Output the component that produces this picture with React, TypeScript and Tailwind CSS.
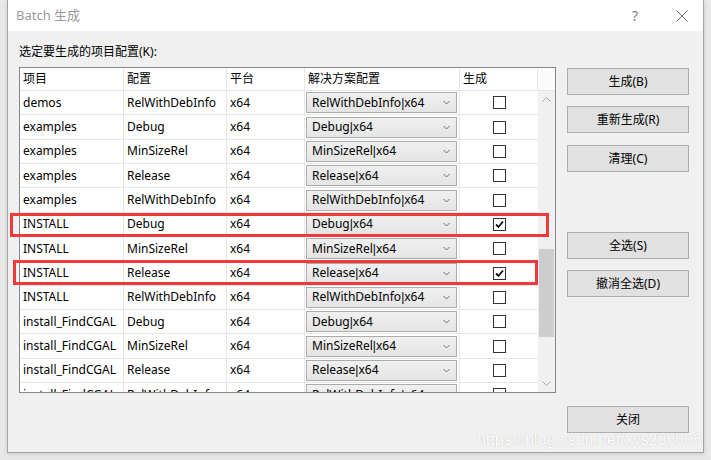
import { Fragment } from 'react';

type Row = { project: string; config: string; checked: boolean };

const rows: Row[] = [
  { project: 'demos', config: 'RelWithDebInfo', checked: false },
  { project: 'examples', config: 'Debug', checked: false },
  { project: 'examples', config: 'MinSizeRel', checked: false },
  { project: 'examples', config: 'Release', checked: false },
  { project: 'examples', config: 'RelWithDebInfo', checked: false },
  { project: 'INSTALL', config: 'Debug', checked: true },
  { project: 'INSTALL', config: 'MinSizeRel', checked: false },
  { project: 'INSTALL', config: 'Release', checked: true },
  { project: 'INSTALL', config: 'RelWithDebInfo', checked: false },
  { project: 'install_FindCGAL', config: 'Debug', checked: false },
  { project: 'install_FindCGAL', config: 'MinSizeRel', checked: false },
  { project: 'install_FindCGAL', config: 'Release', checked: false },
  { project: 'install_FindCGAL', config: 'RelWithDebInfo', checked: false },
];

const cell = 'flex items-center pl-[3px] border-r border-[#e6e6e6] whitespace-nowrap overflow-hidden';

/** Checkbox drawn like the classic Windows one */
function CheckBox({ checked }: { checked: boolean }) {
  return (
    <div className="w-[13px] h-[13px] border border-[#333333] bg-white flex items-center justify-center">
      {checked && (
        <svg width="9" height="9" viewBox="0 0 9 9">
          <path d="M1 4.5 L3.5 7 L8 1.5" fill="none" stroke="#111" strokeWidth="1.8" />
        </svg>
      )}
    </div>
  );
}

/** Combo box for the solution configuration */
function Combo({ value }: { value: string }) {
  return (
    <div className="ml-[1px] mr-[2px] flex-1 h-[21px] flex items-center justify-between pl-[5px] pr-[6px] border border-[#acacac] bg-gradient-to-b from-[#f0f0f0] to-[#e5e5e5]">
      <span className="whitespace-nowrap">
        {value}
        <span style={{ fontFamily: '"Liberation Sans", Arial, sans-serif' }}>|</span>
        x64
      </span>
      <svg width="7" height="5" viewBox="0 0 7 5">
        <path d="M0.5 1 L3.5 4 L6.5 1" fill="none" stroke="#707070" strokeWidth="1" />
      </svg>
    </div>
  );
}

/** Data row of the build grid */
function GridRow({ row }: { row: Row }) {
  return (
    <div className="flex h-[24.35px] shrink-0 border-b border-[#e6e6e6] bg-white">
      <div className={`${cell} w-[104px]`}>{row.project}</div>
      <div className={`${cell} w-[103px]`}>{row.config}</div>
      <div className={`${cell} w-[78px]`}>x64</div>
      <div className="flex items-center w-[155px] border-r border-[#e6e6e6]">
        <Combo value={row.config} />
      </div>
      <div className="flex items-center justify-center w-[78px]">
        <CheckBox checked={row.checked} />
      </div>
    </div>
  );
}

function DialogButton({ label, className = '' }: { label: string; className?: string }) {
  return (
    <button className={`w-[122px] h-[27px] bg-[#e1e1e1] border border-[#adadad] text-black ${className}`}>
      {label}
    </button>
  );
}

export default function App() {
  return (
    <div
      className="relative w-[711px] h-[460px] overflow-hidden bg-[#e8e8e8] pl-[7px] text-[12px] text-black"
      style={{ fontFamily: '"Noto Sans", "Noto Sans CJK SC", sans-serif' }}
    >
      <div className="w-[697px] h-[453px] border-x border-b border-[#a3a3a3] bg-[#f0f0f0] shadow-[0_1px_4px_rgba(0,0,0,0.15)] flex flex-col">
        {/* title bar */}
        <div className="h-[31px] bg-white flex items-center pl-[8px] pr-[15px]">
          <span className="text-[#9a9a9a] text-[13px]">Batch 生成</span>
          <span className="ml-auto text-[#7a7a7a] text-[14px] mr-[38px]">?</span>
          <svg width="12" height="12" viewBox="0 0 12 12">
            <path d="M0.5 0.5 L11.5 11.5 M11.5 0.5 L0.5 11.5" stroke="#6a6a6a" strokeWidth="1" />
          </svg>
        </div>

        <div className="flex flex-1 pl-[11px] pr-[14px]">
          {/* left: label and grid */}
          <div className="flex flex-col pt-[12px]">
            <div className="h-[17px] leading-[17px]">选定要生成的项目配置(K):</div>
            <div className="mt-[7px] w-[537px] h-[326px] border border-[#828790] bg-white flex flex-col overflow-hidden">
              <div className="flex h-[23px] shrink-0 border-b border-[#e6e6e6]">
                <div className={`${cell} w-[104px]`}>项目</div>
                <div className={`${cell} w-[103px]`}>配置</div>
                <div className={`${cell} w-[78px]`}>平台</div>
                <div className={`${cell} w-[155px]`}>解决方案配置</div>
                <div className={`${cell} w-[78px]`}>生成</div>
                <div className="flex-1 bg-[#fbfbfb]" />
              </div>
              <div className="flex flex-1 min-h-0">
                <div className="w-[518px] flex flex-col overflow-hidden">
                  {rows.map((row, i) => (
                    <Fragment key={i}>
                      <GridRow row={row} />
                    </Fragment>
                  ))}
                </div>
                {/* scrollbar */}
                <div className="w-[17px] bg-[#f0f0f0] flex flex-col">
                  <div className="h-[17px] flex items-center justify-center">
                    <svg width="9" height="5" viewBox="0 0 9 5">
                      <path d="M0.5 4.5 L4.5 0.5 L8.5 4.5" fill="none" stroke="#a6a6a6" strokeWidth="1" />
                    </svg>
                  </div>
                  <div className="h-[141px]" />
                  <div className="h-[88px] mx-[1px] bg-[#cdcdcd]" />
                  <div className="flex-1" />
                  <div className="h-[17px] flex items-center justify-center">
                    <svg width="9" height="5" viewBox="0 0 9 5">
                      <path d="M0.5 0.5 L4.5 4.5 L8.5 0.5" fill="none" stroke="#a6a6a6" strokeWidth="1" />
                    </svg>
                  </div>
                </div>
              </div>
            </div>
          </div>

          {/* right: buttons */}
          <div className="ml-[11px] flex flex-col pt-[37px]">
            <DialogButton label="生成(B)" />
            <DialogButton label="重新生成(R)" className="mt-[11px]" />
            <DialogButton label="清理(C)" className="mt-[12px]" />
            <DialogButton label="全选(S)" className="mt-[60px]" />
            <DialogButton label="撤消全选(D)" className="mt-[11px]" />
            <DialogButton label="关闭" className="mt-[109px]" />
          </div>
        </div>
      </div>

      {/* annotation boxes */}
      <div className="absolute left-[10px] top-[213px] w-[539px] h-[24px] border-[3px] border-[#f03a3a]" />
      <div className="absolute left-[13px] top-[260px] w-[525px] h-[25px] border-[3px] border-[#f03a3a]" />

      {/* watermark */}
      <div
        className="absolute right-[9px] top-[428px] text-[16px] text-white [text-shadow:0_0_1px_#b0b0b0]"
        style={{ fontFamily: '"Liberation Sans", Arial, sans-serif' }}
      >
        https://blog.csdn.net/xys206006
      </div>
    </div>
  );
}
